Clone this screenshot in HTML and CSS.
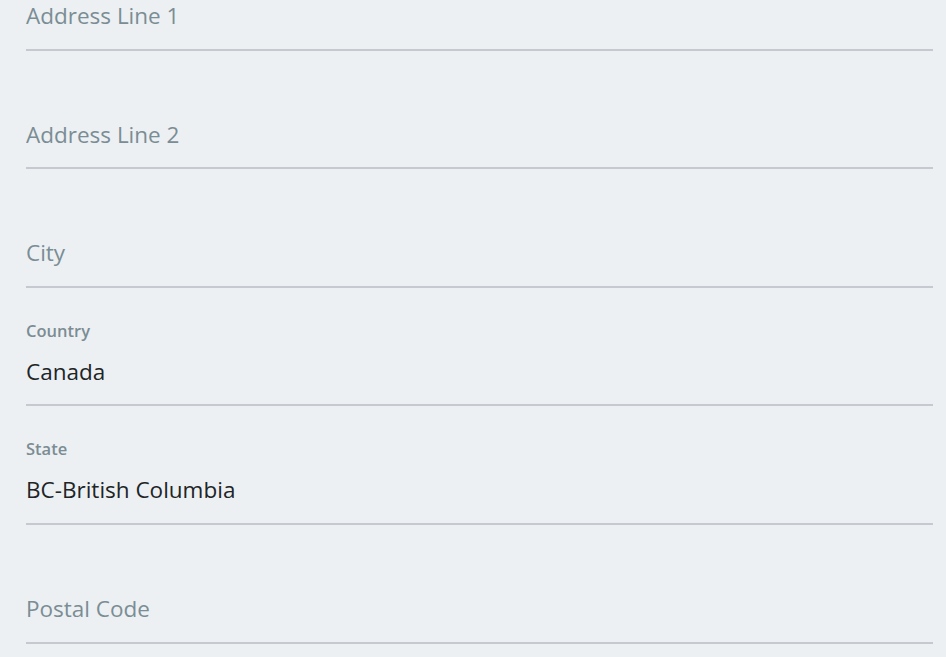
FILE: index.html
```html
<!DOCTYPE html>
<html lang="en">
<head>
    <meta charset="UTF-8">
    <title>Address</title>
    <link rel="stylesheet" href="styles.css">
</head>
<body>
    <form class="address">
        <div class="field">
            <label class="label hidden">Address Line 1</label>
            <input class="input" type="text" placeholder="Address Line 1">
        </div>
        <div class="field">
            <label class="label hidden">Address Line 2</label>
            <input class="input" type="text" placeholder="Address Line 2">
        </div>
        <div class="field">
            <label class="label hidden">City</label>
            <input class="input" type="text" placeholder="City">
        </div>
        <div class="field">
            <label class="label">Country</label>
            <input class="input" type="text" value="Canada">
        </div>
        <div class="field">
            <label class="label">State</label>
            <input class="input" type="text" value="BC-British Columbia">
        </div>
        <div class="field">
            <label class="label hidden">Postal Code</label>
            <input class="input" type="text" placeholder="Postal Code">
        </div>
    </form>
</body>
</html>
```

FILE: styles.css
```css
html, body {
    margin: 0;
    padding: 0;
    background-color: #edf0f2;
    font-family: "Open Sans", "Noto Sans", sans-serif;
    overflow: hidden;
}

.address {
    display: flex;
    flex-direction: column;
    margin: -68px 13px 0 26px;
}

.field {
    display: flex;
    flex-direction: column;
    padding: 33px 0 12.6px;
    border-bottom: 2px solid #c4cacf;
}

.label {
    font-size: 16.5px;
    line-height: 20px;
    font-weight: 600;
    color: #7b8c94;
    margin-bottom: 11px;
}

.label.hidden {
    visibility: hidden;
}

.input {
    border: none;
    outline: none;
    background: transparent;
    padding: 0;
    margin: 0;
    height: 40px;
    line-height: 40px;
    font-family: inherit;
    font-size: 22.5px;
    color: #202427;
}

.input::placeholder {
    color: #7a8d95;
    opacity: 1;
}
```
